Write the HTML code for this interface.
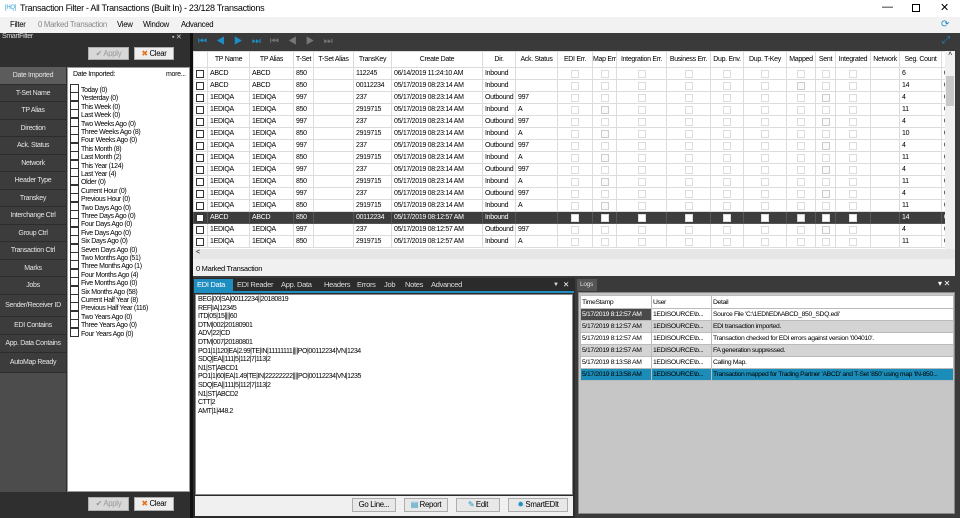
<!DOCTYPE html>
<html><head><meta charset="utf-8"><style>
*{box-sizing:border-box;margin:0;padding:0}
body{width:960px;height:518px;overflow:hidden;background:#3a3a3a;font-family:"Liberation Sans",sans-serif;font-size:8px;color:#000;position:relative;letter-spacing:-0.3px}
.a{position:absolute}
.title{left:0;top:0;width:960px;height:17px;background:#fff;font-size:9px;line-height:17px}
.menu{left:0;top:17px;width:960px;height:16px;background:#f2f2f2;font-size:7.8px;line-height:16px}
.menu span{position:absolute;top:0}
.btn{background:#e8e8e8;border:1px solid #adadad;font-size:7.8px;text-align:center;line-height:12px}
.nav div{position:absolute;left:0;width:66px;background:#3c3c3c;border-bottom:1px solid #2c2c2c;color:#e6e6e6;text-align:center;font-size:7px}
.fl div{position:absolute;left:3px;height:8px;line-height:8px;font-size:7px;white-space:nowrap;letter-spacing:-0.35px}
.fl div:before{content:"";display:inline-block;width:7px;height:7px;border:1px solid #333;background:#fff;vertical-align:-1px;margin-right:2px}
table{border-collapse:collapse;table-layout:fixed}
.g td,.g th{border:1px solid #dcdcdc;height:12px;font-size:7px;font-weight:normal;white-space:nowrap;overflow:hidden;padding:0 2px;text-align:left;letter-spacing:-0.3px}
.g th{text-align:center;background:#fff;padding:0}
.cb{display:inline-block;width:8px;height:8px;border:1px solid #333;background:#fff;vertical-align:middle}
.lc{display:block;margin:auto;width:8px;height:8px;border:1px solid #ddd;background:#fff}
.sel td{background:#3d3d3d;color:#fff;border-color:#555}
.l td{border:1px solid #bbb;height:12px;font-size:6.8px;white-space:nowrap;overflow:hidden;padding:0 1px;letter-spacing:-0.35px}
.tabs span{position:absolute;top:0;height:12px;line-height:12px;color:#ddd;font-size:7.5px}
.edi div{height:8.6px;line-height:8.6px;font-size:7px;letter-spacing:-0.45px}
</style></head><body>
<div class="a title"><span style="position:absolute;left:5px;color:#2a9bd0;font-size:6px">[HQ]</span><span style="position:absolute;left:20px">Transaction Filter - All Transactions (Built In) - 23/128 Transactions</span>
<span style="position:absolute;left:882px;top:-1px;font-size:11px">—</span><span style="position:absolute;left:912px;top:4px;width:8px;height:8px;border:1px solid #000"></span><span style="position:absolute;left:940px;font-size:11px">✕</span></div>
<div class="a menu"><span style="left:10px">Filter</span><span style="left:38px;color:#888">0 Marked Transaction</span><span style="left:117px">View</span><span style="left:143px">Window</span><span style="left:181px">Advanced</span><span style="left:941px;color:#1f8ac0;font-size:10px">⟳</span></div>
<!-- left panel -->
<div class="a" style="left:0;top:33px;width:190px;height:485px;background:#2f2f2f"></div>
<div class="a" style="left:2px;top:33px;color:#ddd;font-size:7px">SmartFilter</div>
<div class="a" style="left:172px;top:33px;color:#ccc;font-size:7px">▪ ✕</div>
<div class="a btn" style="left:88px;top:47px;width:41px;height:13px;color:#999;background:#d8d8d8">✔ Apply</div>
<div class="a btn" style="left:134px;top:47px;width:40px;height:13px;background:#eee"><span style="color:#e8731a">✖</span> Clear</div>
<div class="a" style="left:0;top:67px;width:66px;height:425px;background:#4c4c4c"></div>
<div class="a nav" style="left:0;top:67px">
<div style="top:0;height:18px;line-height:18px;background:#5c5c5c">Date Imported</div>
<div style="top:18px;height:17px;line-height:17px">T-Set Name</div>
<div style="top:35px;height:18px;line-height:18px">TP Alias</div>
<div style="top:53px;height:17px;line-height:17px">Direction</div>
<div style="top:70px;height:18px;line-height:18px">Ack. Status</div>
<div style="top:88px;height:17px;line-height:17px">Network</div>
<div style="top:105px;height:18px;line-height:18px">Header Type</div>
<div style="top:123px;height:17px;line-height:17px">Transkey</div>
<div style="top:140px;height:18px;line-height:18px">Interchange Ctrl</div>
<div style="top:158px;height:17px;line-height:17px">Group Ctrl</div>
<div style="top:175px;height:18px;line-height:18px">Transaction Ctrl</div>
<div style="top:193px;height:17px;line-height:17px">Marks</div>
<div style="top:210px;height:18px;line-height:18px">Jobs</div>
<div style="top:228px;height:22px;line-height:22px">Sender/Receiver ID</div>
<div style="top:250px;height:18px;line-height:18px">EDI Contains</div>
<div style="top:268px;height:18px;line-height:18px">App. Data Contains</div>
<div style="top:286px;height:20px;line-height:20px">AutoMap Ready</div>
</div>
<div class="a" style="left:67px;top:67px;width:123px;height:425px;background:#fff;border:1px solid #999"></div>
<div class="a" style="left:73px;top:71px;font-size:7px">Date Imported:</div>
<div class="a" style="left:166px;top:71px;font-size:7px">more...</div>
<div class="a fl" style="left:67px;top:84px">
<div style="top:0">Today (0)</div><div style="top:8.4px">Yesterday (0)</div><div style="top:16.8px">This Week (0)</div><div style="top:25.2px">Last Week (0)</div><div style="top:33.6px">Two Weeks Ago (0)</div><div style="top:42px">Three Weeks Ago (8)</div><div style="top:50.4px">Four Weeks Ago (0)</div><div style="top:58.8px">This Month (8)</div><div style="top:67.2px">Last Month (2)</div><div style="top:75.6px">This Year (124)</div><div style="top:84px">Last Year (4)</div><div style="top:92.4px">Older (0)</div><div style="top:100.8px">Current Hour (0)</div><div style="top:109.2px">Previous Hour (0)</div><div style="top:117.6px">Two Days Ago (0)</div><div style="top:126px">Three Days Ago (0)</div><div style="top:134.4px">Four Days Ago (0)</div><div style="top:142.8px">Five Days Ago (0)</div><div style="top:151.2px">Six Days Ago (0)</div><div style="top:159.6px">Seven Days Ago (0)</div><div style="top:168px">Two Months Ago (51)</div><div style="top:176.4px">Three Months Ago (1)</div><div style="top:184.8px">Four Months Ago (4)</div><div style="top:193.2px">Five Months Ago (0)</div><div style="top:201.6px">Six Months Ago (58)</div><div style="top:210px">Current Half Year (8)</div><div style="top:218.4px">Previous Half Year (116)</div><div style="top:226.8px">Two Years Ago (0)</div><div style="top:235.2px">Three Years Ago (0)</div><div style="top:243.6px">Four Years Ago (0)</div>
</div>
<div class="a btn" style="left:88px;top:497px;width:41px;height:14px;color:#999;background:#d8d8d8">✔ Apply</div>
<div class="a btn" style="left:134px;top:497px;width:40px;height:14px;background:#eee"><span style="color:#e8731a">✖</span> Clear</div>
<!-- grid area -->
<div class="a" style="left:190px;top:33px;width:3px;height:485px;background:#111"></div>
<div class="a" style="left:193px;top:33px;width:767px;height:18px;background:#3a3a3a;color:#1c8fc7;font-size:10px;line-height:18px;letter-spacing:9px;padding-left:5px">⏮◀▶⏭<span style="color:#777">⏮◀▶⏭</span></div>
<div class="a" style="left:942px;top:35px;color:#1c8fc7;font-size:10px">⤢</div>
<div class="a" style="left:193px;top:51px;width:762px;height:198px;background:#fff;overflow:hidden">
<table class="g" style="width:752px"><colgroup><col style="width:14px"><col style="width:42px"><col style="width:44px"><col style="width:20px"><col style="width:40px"><col style="width:38px"><col style="width:91px"><col style="width:33px"><col style="width:42px"><col style="width:35px"><col style="width:24px"><col style="width:50px"><col style="width:44px"><col style="width:33px"><col style="width:43px"><col style="width:29px"><col style="width:20px"><col style="width:35px"><col style="width:29px"><col style="width:42px"><col style="width:4px"></colgroup>
<tr style="height:16px"><th></th><th>TP Name</th><th>TP Alias</th><th>T-Set</th><th>T-Set Alias</th><th>TransKey</th><th>Create Date</th><th>Dir.</th><th>Ack. Status</th><th>EDI Err.</th><th>Map Err.</th><th>Integration Err.</th><th>Business Err.</th><th>Dup. Env.</th><th>Dup. T-Key</th><th>Mapped</th><th>Sent</th><th>Integrated</th><th>Network</th><th>Seg. Count</th><th></th></tr>
<tbody id="gb"></tbody></table></div>
<div class="a" style="left:945px;top:51px;width:10px;height:198px;background:#f0f0f0"><div style="position:absolute;top:25px;left:1px;width:8px;height:30px;background:#c8c8c8"></div><div style="text-align:center;font-size:7px">˄</div></div>
<div class="a" style="left:193px;top:249px;width:762px;height:10px;background:#e6e6e6;font-size:7px;padding-left:3px">&lt;</div>
<div class="a" style="left:193px;top:259px;width:762px;height:17px;background:#f0f0f0;font-size:7.5px;line-height:20px;padding-left:3px">0 Marked Transaction</div>
<!-- EDI panel -->
<div class="a" style="left:193px;top:278px;width:382px;height:240px;background:#2b2b2b"></div>
<div class="a tabs" style="left:193px;top:279px;width:382px;height:13px">
<span style="left:1px;width:39px;background:#1e8ec0;color:#fff;padding-left:3px">EDI Data</span><span style="left:44px">EDI Reader</span><span style="left:88px">App. Data</span><span style="left:131px">Headers</span><span style="left:164px">Errors</span><span style="left:191px">Job</span><span style="left:212px">Notes</span><span style="left:238px">Advanced</span><span style="left:360px;font-size:6px">▼</span><span style="left:370px;color:#fff">✕</span></div>
<div class="a" style="left:194px;top:291px;width:380px;height:2px;background:#1e8ec0"></div>
<div class="a" style="left:195px;top:294px;width:378px;height:201px;background:#fff;border:1px solid #888"></div>
<div class="a edi" style="left:198px;top:296px">
<div>BEG|00|SA|00112234||20180819</div><div>REF|IA|12345</div><div>ITD|05|15||||60</div><div>DTM|002|20180901</div><div>ADV|22|CD</div><div>DTM|007|20180801</div><div>PO1|1|120|EA|2.99|TE|IN|11111111||||PO|00112234|VN|1234</div><div>SDQ|EA||111|5|112|7|113|2</div><div>N1|ST|ABCD1</div><div>PO1|1|60|EA|1.49|TE|IN|22222222||||PO|00112234|VN|1235</div><div>SDQ|EA||111|5|112|7|113|2</div><div>N1|ST|ABCD2</div><div>CTT|2</div><div>AMT|1|448.2</div></div>
<div class="a" style="left:195px;top:496px;width:378px;height:20px;background:#f0f0f0"></div>
<div class="a btn" style="left:352px;top:498px;width:44px;height:14px">Go Line...</div>
<div class="a btn" style="left:404px;top:498px;width:44px;height:14px"><span style="color:#1e8ec0">▤</span> Report</div>
<div class="a btn" style="left:456px;top:498px;width:44px;height:14px"><span style="color:#1e8ec0">✎</span> Edit</div>
<div class="a btn" style="left:508px;top:498px;width:60px;height:14px"><span style="color:#1e8ec0">✹</span> SmartEDIt</div>
<!-- logs -->
<div class="a" style="left:575px;top:278px;width:385px;height:240px;background:#3a3a3a"></div>
<div class="a" style="left:577px;top:279px;width:20px;height:12px;background:#555;color:#ddd;font-size:6.5px;line-height:12px;padding-left:3px">Logs</div>
<div class="a" style="left:938px;top:279px;color:#fff;font-size:8px">▾ ✕</div>
<div class="a" style="left:578px;top:292px;width:377px;height:222px;background:#c6c6c6;border:1px solid #888"></div>
<div class="a" style="left:580px;top:295px;width:373px">
<table class="l" style="width:373px;background:#fff"><colgroup><col style="width:71px"><col style="width:60px"><col style="width:242px"></colgroup>
<tr style="height:13px"><td>TimeStamp</td><td>User</td><td>Detail</td></tr>
<tr><td style="background:#4a4a4a;color:#fff">5/17/2019 8:12:57 AM</td><td>1EDISOURCE\b...</td><td>Source File 'C:\1EDI\EDI\ABCD_850_SDQ.edi'</td></tr>
<tr style="background:#d4d4d4"><td>5/17/2019 8:12:57 AM</td><td>1EDISOURCE\b...</td><td>EDI transaction imported.</td></tr>
<tr><td>5/17/2019 8:12:57 AM</td><td>1EDISOURCE\b...</td><td>Transaction checked for EDI errors against version '004010'.</td></tr>
<tr style="background:#d4d4d4"><td>5/17/2019 8:12:57 AM</td><td>1EDISOURCE\b...</td><td>FA generation suppressed.</td></tr>
<tr><td>5/17/2019 8:13:58 AM</td><td>1EDISOURCE\b...</td><td>Calling Map.</td></tr>
<tr style="background:#1b8db8"><td>5/17/2019 8:13:58 AM</td><td>1EDISOURCE\b...</td><td>Transaction mapped for Trading Partner 'ABCD' and T-Set '850' using map 'IN-850...</td></tr>
</table></div>
<script>
var R=[["ABCD","850","112245","06/14/2019 11:24:10 AM","Inbound","",6,0,0,0],["ABCD","850","00112234","05/17/2019 08:23:14 AM","Inbound","",14,0,1,0]];
var seg=[4,11,4,10,4,11,4,11,4,11];
for(var i=0;i<10;i++){var o=i%2==0;R.push(["1EDIQA",o?"997":"850",o?"237":"2919715","05/17/2019 08:23:14 AM",o?"Outbound":"Inbound",o?"997":"A",seg[i],o?0:1,0,o?1:0]);}
R.push(["ABCD","850","00112234","05/17/2019 08:12:57 AM","Inbound","",14,0,1,0,1]);
R.push(["1EDIQA","997","237","05/17/2019 08:12:57 AM","Outbound","997",4,0,0,1]);
R.push(["1EDIQA","850","2919715","05/17/2019 08:12:57 AM","Inbound","A",11,0,0,0]);
var h="";R.forEach(function(r){var n=r[0]=="ABCD"?"ABCD":"1EDIQA";var c=function(k){return '<td><span class="lc" style="'+(k?'border-color:#ccc;background:#fafafa':'')+'"></span></td>'};
h+='<tr'+(r[10]?' class="sel"':'')+'><td><span class="cb"></span></td><td>'+n+'</td><td>'+n+'</td><td>'+r[1]+'</td><td></td><td>'+r[2]+'</td><td>'+r[3]+'</td><td>'+r[4]+'</td><td>'+r[5]+'</td>'+c(0)+c(r[7])+c(0)+c(0)+c(0)+c(0)+c(r[8])+c(r[9])+c(0)+'<td></td><td>'+r[6]+'</td><td>0</td></tr>';});
document.getElementById("gb").innerHTML=h;
</script>
</body></html>
